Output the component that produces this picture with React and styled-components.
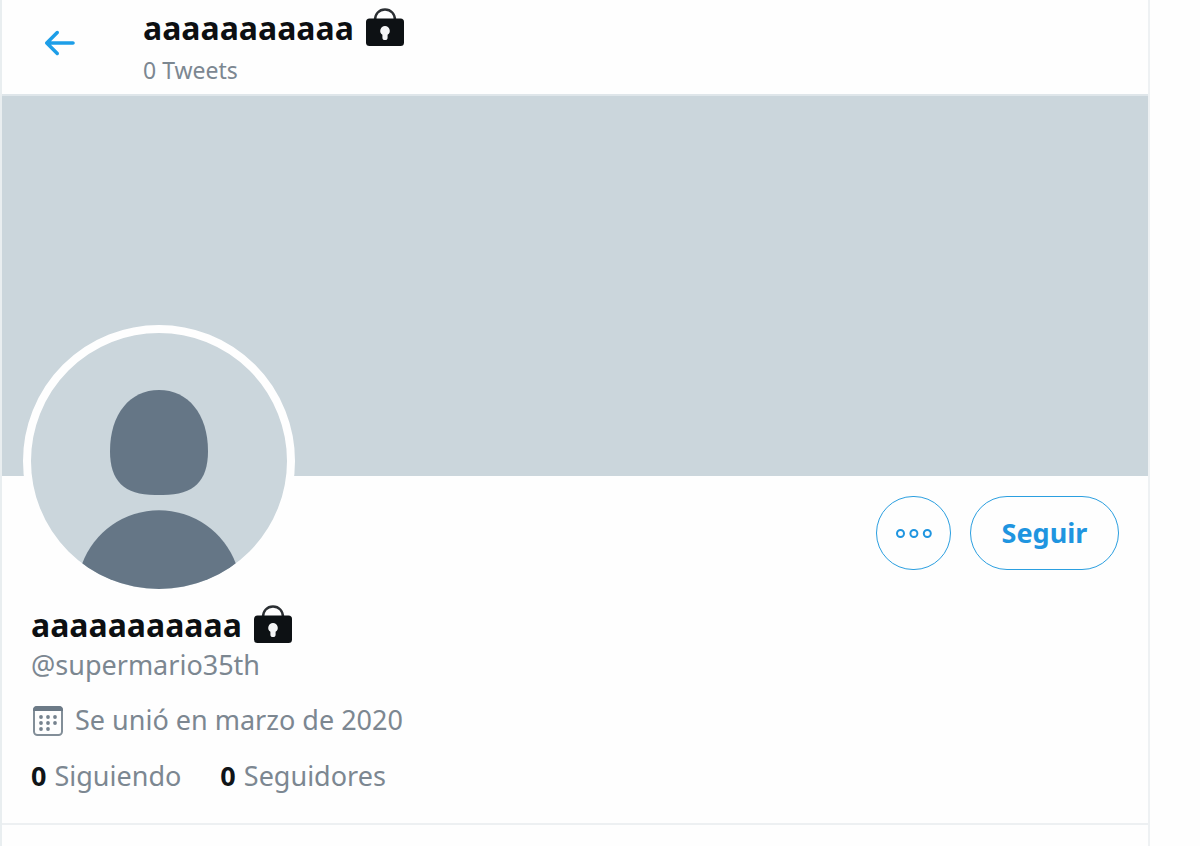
import React from "react";
import styled, { createGlobalStyle } from "styled-components";

const GlobalStyle = createGlobalStyle`
  *, *::before, *::after { box-sizing: border-box; }
  body {
    margin: 0;
    background: #fefefe;
    color: #101418;
    font-family: "Noto Sans", "Open Sans", sans-serif;
    font-size: 27px;
    line-height: 40px;
  }
`;

const Column = styled.main`
  min-height: 100vh;
  margin-right: 50px;
  border-left: 2px solid #e9eef0;
  border-right: 2px solid #eef1f3;
`;

const TopBar = styled.header`
  display: flex;
  align-items: flex-start;
  gap: 63px;
  height: 96px;
  padding: 8px 36px 0;
  border-bottom: 2px solid #dfe6ea;
`;

const BackButton = styled.button`
  display: flex;
  margin-top: 14px;
  padding: 0;
  border: 0;
  background: none;
  color: #1d9ee8;
  cursor: pointer;
`;

const Name = styled.div`
  display: flex;
  align-items: center;
  gap: 12px;
  margin: 0;
  font-size: 32px;
  font-weight: 700;
  line-height: 40px;
  color: #0c0f12;

  svg { margin-bottom: 2px; }
`;

const Muted = styled.div`
  font-size: ${(p) => (p.$small ? "23px" : "27px")};
  line-height: ${(p) => (p.$small ? "44px" : "40px")};
  color: #7c8791;
`;

const Banner = styled.div`
  height: 380px;
  background: #cbd6dc;
`;

const Profile = styled.section`
  padding: 20px 29px 27px;
  border-bottom: 2px solid #edf0f2;
`;

const ProfileTop = styled.div`
  display: flex;
  align-items: flex-start;
  justify-content: space-between;
  margin-bottom: 8px;
`;

const Avatar = styled.svg`
  display: block;
  width: 272px;
  height: 272px;
  margin: -171px 0 0 -8px;
  border: 8px solid #fefefe;
  border-radius: 50%;
  background: #cbd6dc;
`;

const Actions = styled.div`
  display: flex;
  gap: 19px;
`;

const PillButton = styled.button`
  display: flex;
  align-items: center;
  justify-content: center;
  width: ${(p) => (p.$round ? "75px" : "149px")};
  height: 74px;
  padding: 0;
  border: 1px solid #2b9fe0;
  border-radius: 38px;
  background: transparent;
  color: #1f95e0;
  font: inherit;
  font-size: 27px;
  font-weight: 700;
  cursor: pointer;
`;

const Joined = styled(Muted)`
  display: flex;
  align-items: center;
  gap: 12px;
  margin: 15px 0 16px 2px;

  svg { margin-top: 2px; }
`;

const Stats = styled.nav`
  display: flex;
  gap: 39px;
`;

const StatLink = styled.a`
  display: flex;
  gap: 8px;
  color: #7c8791;
  text-decoration: none;

  strong { color: #101418; }
`;

const BackIcon = () => (
  <svg width="42" height="42" viewBox="0 0 24 24" fill="currentColor" aria-hidden="true">
    <path d="M20 11H7.414l4.293-4.293c.39-.39.39-1.023 0-1.414s-1.023-.39-1.414 0l-6 6c-.39.39-.39 1.023 0 1.414l6 6c.195.195.45.293.707.293s.512-.098.707-.293c.39-.39.39-1.023 0-1.414L7.414 13H20c.553 0 1-.447 1-1s-.447-1-1-1z" />
  </svg>
);

const LockIcon = () => (
  <svg width="38" height="38" viewBox="0 0 38 38" role="img" aria-label="Cuenta protegida">
    <path d="M9 12C9 6 13 1.500 19 1.500S29 6 29 12" fill="none" stroke="#2b2f33" strokeWidth="2.400" />
    <rect y="10.500" width="38" height="27.500" rx="3.500" fill="#0d1114" />
    <path d="M19 18a4.800 4.800 0 0 0-2.600 8.800V29.500a2.600 2.600 0 0 0 5.200 0V26.800A4.800 4.800 0 0 0 19 18z" fill="#f4f5f6" />
  </svg>
);

const DotsIcon = () => (
  <svg width="37" height="10" viewBox="0 0 37 10" fill="none" stroke="currentColor" strokeWidth="2" aria-hidden="true">
    <circle cx="5.500" cy="5.500" r="3.500" />
    <circle cx="18.900" cy="5.500" r="3.500" />
    <circle cx="32.300" cy="5.500" r="3.500" />
  </svg>
);

const calendarDots = [
  [8, 11], [15, 11], [22, 11],
  [8, 17], [15, 17], [22, 17],
  [8, 23], [15, 23],
];

const CalendarIcon = () => (
  <svg width="30" height="30" viewBox="0 0 30 30" aria-hidden="true">
    <rect x="1" y="1" width="28" height="28" rx="3.500" fill="none" stroke="#828e98" strokeWidth="2" />
    <path d="M0 5V4a4 4 0 0 1 4-4h22a4 4 0 0 1 4 4v1z" fill="#6c7a87" />
    {calendarDots.map(([x, y]) => (
      <circle key={`${x}-${y}`} cx={x} cy={y} r="1.900" fill="#75828e" />
    ))}
  </svg>
);

export default function App() {
  return (
    <>
      <GlobalStyle />
      <Column>
        <TopBar>
          <BackButton type="button" aria-label="Atrás">
            <BackIcon />
          </BackButton>
          <div>
            <Name as="h1">
              aaaaaaaaaaa
              <LockIcon />
            </Name>
            <Muted $small>0 Tweets</Muted>
          </div>
        </TopBar>
        <Banner />
        <Profile>
          <ProfileTop>
            <Avatar viewBox="0 0 256 256" role="img" aria-label="Foto de perfil">
              <g fill="#657686">
                <path d="M128 57C157 57 177 81 177 118C177 148 163 162 132 162H124C93 162 79 148 79 118C79 81 99 57 128 57z" />
                <path d="M51 231A82 82 0 0 1 205 231A128 128 0 0 1 51 231z" />
              </g>
            </Avatar>
            <Actions>
              <PillButton type="button" $round aria-label="Más opciones">
                <DotsIcon />
              </PillButton>
              <PillButton type="button">Seguir</PillButton>
            </Actions>
          </ProfileTop>
          <Name as="h2">
            aaaaaaaaaaa
            <LockIcon />
          </Name>
          <Muted>@supermario35th</Muted>
          <Joined>
            <CalendarIcon />
            Se unió en marzo de 2020
          </Joined>
          <Stats>
            <StatLink href="#siguiendo">
              <strong>0</strong> Siguiendo
            </StatLink>
            <StatLink href="#seguidores">
              <strong>0</strong> Seguidores
            </StatLink>
          </Stats>
        </Profile>
      </Column>
    </>
  );
}
